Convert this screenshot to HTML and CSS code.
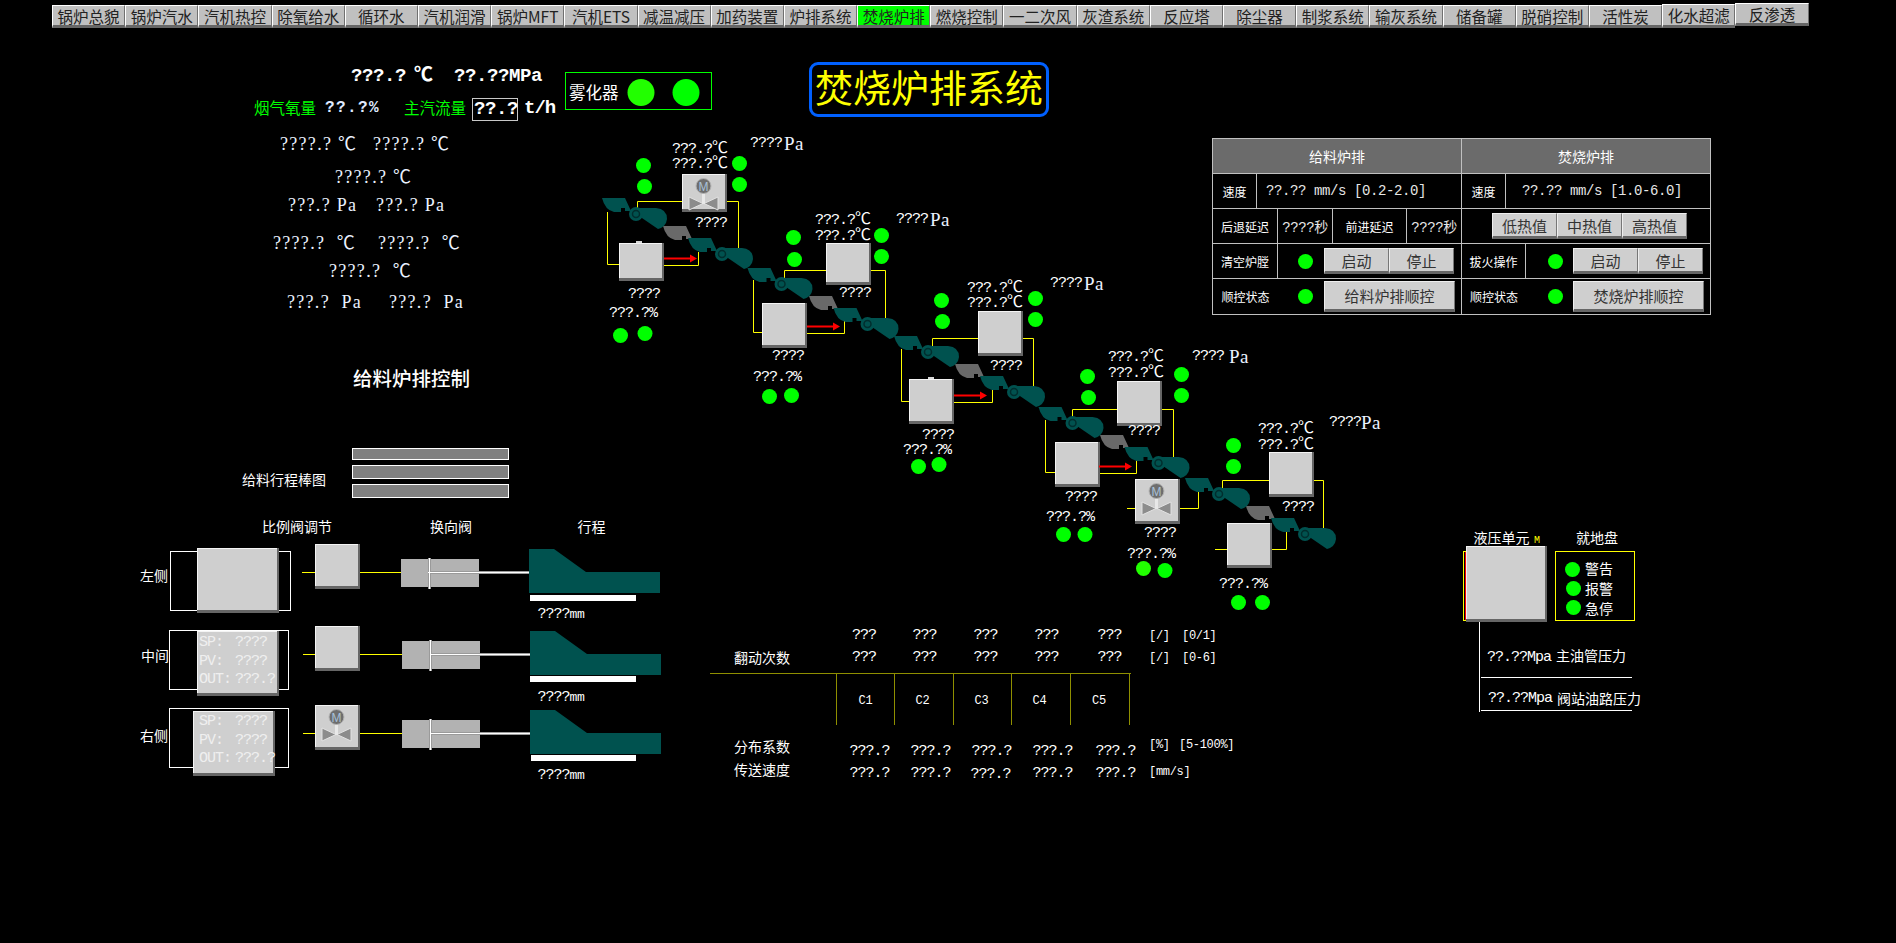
FILE: index.html
```html
<!DOCTYPE html>
<html lang="zh-CN">
<head>
    <meta charset="UTF-8">
    <title>焚烧炉排系统</title>
    <link rel="stylesheet" href="styles.css">
</head>
<body>
    <nav class="nav">
        <a class="nav-btn">锅炉总貌</a><a class="nav-btn">锅炉汽水</a><a class="nav-btn">汽机热控</a><a class="nav-btn">除氧给水</a>
        <a class="nav-btn">循环水</a><a class="nav-btn">汽机润滑</a><a class="nav-btn">锅炉MFT</a><a class="nav-btn">汽机ETS</a>
        <a class="nav-btn">减温减压</a><a class="nav-btn">加药装置</a><a class="nav-btn">炉排系统</a><a class="nav-btn active">焚烧炉排</a>
        <a class="nav-btn">燃烧控制</a><a class="nav-btn">一二次风</a><a class="nav-btn">灰渣系统</a><a class="nav-btn">反应塔</a>
        <a class="nav-btn">除尘器</a><a class="nav-btn">制浆系统</a><a class="nav-btn">输灰系统</a><a class="nav-btn">储备罐</a>
        <a class="nav-btn">脱硝控制</a><a class="nav-btn">活性炭</a><a class="nav-btn up1">化水超滤</a><a class="nav-btn up2">反渗透</a>
    </nav>

    <h1 class="title">焚烧炉排系统</h1>

    <!-- control table, top right -->
    <section class="panel">
        <div class="side">
            <div class="row head">给料炉排</div>
            <div class="row">
                <span class="cell w44">速度</span>
                <span class="cell mono fill">??.?? mm/s [0.2-2.0]</span>
            </div>
            <div class="row">
                <span class="cell w65">后退延迟</span>
                <span class="cell w55 mono">????秒</span>
                <span class="cell w74">前进延迟</span>
                <span class="cell mono fill center">????秒</span>
            </div>
            <div class="row">
                <span class="cell w65">清空炉膛</span>
                <span class="led-slot"><i class="led"></i></span>
                <button class="btn w65b">启动</button><button class="btn w65b">停止</button>
            </div>
            <div class="row last">
                <span class="cell w65 bare">顺控状态</span>
                <span class="led-slot"><i class="led"></i></span>
                <button class="btn wide">给料炉排顺控</button>
            </div>
        </div>
        <div class="side">
            <div class="row head">焚烧炉排</div>
            <div class="row">
                <span class="cell w44">速度</span>
                <span class="cell mono fill pad">??.?? mm/s [1.0-6.0]</span>
            </div>
            <div class="row heat">
                <button class="btn w65b">低热值</button><button class="btn w65b">中热值</button><button class="btn w65b">高热值</button>
            </div>
            <div class="row">
                <span class="cell w64">拔火操作</span>
                <span class="led-slot short"><i class="led"></i></span>
                <button class="btn w65b">启动</button><button class="btn w65b">停止</button>
            </div>
            <div class="row last">
                <span class="cell w64 bare">顺控状态</span>
                <span class="led-slot short"><i class="led"></i></span>
                <button class="btn wide">焚烧炉排顺控</button>
            </div>
        </div>
    </section>

    <!-- process diagram -->
    <svg class="plant" width="1896" height="943" viewBox="0 0 1896 943">
        <defs>
            <g id="b45">
                <rect class="bx-dark" width="45" height="45"/><rect class="bx-hi" width="43" height="42"/><rect class="bx" x="1" y="1" width="42" height="41"/>
            </g>
            <g id="b45m">
                <rect class="bx-dark" width="45" height="42"/><rect class="bx-hi" width="43" height="39"/><rect class="bx" x="1" y="1" width="42" height="38"/>
            </g>
            <g id="b45s">
                <rect class="bx-dark" width="45" height="38"/><rect class="bx-hi" width="43" height="35"/><rect class="bx" x="1" y="1" width="42" height="34"/>
            </g>
            <g id="bwide">
                <rect class="bx-dark" width="82" height="65"/><rect class="bx-hi" width="80" height="62"/><rect class="bx" x="1" y="1" width="79" height="61"/>
            </g>
            <g id="mv">
                <path class="tri" d="M7,23 V36 L21,29.5 Z M36,23 V36 L22,29.5 Z"/>
                <path class="stem" d="M21.5,18 V30"/>
                <circle class="mot" cx="21.5" cy="12" r="7.5"/>
                <text class="mot-t" x="21.5" y="12.5">M</text>
            </g>
            <path id="scoop" d="M-34,-16 H-11 L-5,-3 H-11 V-6 H-15 V-2 H-22 Q-31,-4 -34,-16 Z"/>
            <g id="step">
                <use href="#scoop"/>
                <path d="M3,-6 H20 Q31,-5 31,5 Q30,13 22,15 L3,2 Z"/>
                <circle r="7"/>
                <circle class="ring" r="3.5"/>
            </g>
            <path id="arrow" d="M0,-1 H26 V-4 L33,0 L26,4 V1 H0 Z"/>
        </defs>

        <!-- top readouts -->
        <g class="readout bold">
            <text x="351" y="76">???.?<tspan x="414">℃</tspan></text>
            <text x="454" y="76">??.??MPa</text>
            <text class="green cjk15" x="254" y="107">烟气氧量</text>
            <text class="thin" x="325" y="108">??.?%</text>
            <text class="green cjk15" x="404" y="107">主汽流量</text>
            <rect class="flow-box" x="472.5" y="98.5" width="45" height="22"/>
            <text x="474" y="109">??.?</text>
            <text class="unit" x="524" y="108">t/h</text>
        </g>
        <rect class="green-box" x="565.5" y="72.5" width="146" height="37"/>
        <text class="cjk big16" x="569" y="92">雾化器</text>
        <circle class="ledc alt" cx="641" cy="92.5" r="13.5"/>
        <circle class="ledc" cx="686" cy="92.5" r="13.5"/>

        <!-- left readouts -->
        <g class="serif">
            <text x="280" y="144">????.? ℃</text><text x="373" y="144">????.? ℃</text>
            <text x="335" y="177">????.? ℃</text>
            <text x="288" y="205">???.? Pa</text><text x="376" y="205">???.? Pa</text>
            <text x="273" y="243">????.?  ℃</text><text x="378" y="243">????.?  ℃</text>
            <text x="329" y="271">????.?  ℃</text>
            <text x="287" y="302">???.?  Pa</text><text x="389" y="302">???.?  Pa</text>
        </g>
        <text class="cjk head-t" x="353" y="377">给料炉排控制</text>

        <!-- yellow linkages -->
        <g class="yl">
            <path d="M607.5,212 V264.5 H619"/><path d="M664,265.5 H698.5 V252"/><path d="M637.5,208 V201.5 H682"/><path d="M727,201.5 H738.5 V248"/>
            <path d="M753.5,280 V332.5 H762"/><path d="M807,333.5 H844.5 V319"/><path d="M784.5,278 V270.5 H826"/><path d="M871,270.5 H885.5 V318"/>
            <path d="M901.5,349 V401.5 H909"/><path d="M954,402.5 H992.5 V388"/><path d="M932.5,346 V338.5 H978"/><path d="M1023,338.5 H1033.5 V386"/>
            <path d="M1045.5,420 V472.5 H1055"/><path d="M1100,473.5 H1136.5 V459"/><path d="M1072.5,417 V409.5 H1117"/><path d="M1162,409.5 H1173.5 V457"/>
            <path d="M1127,508.5 H1135"/><path d="M1180,508.5 H1198.5 V491"/><path d="M1222.5,488 V480.5 H1269"/><path d="M1314,480.5 H1323.5 V528"/>
            <path d="M1215,549.5 H1227"/><path d="M1272,549.5 H1286.5 V532"/>
            <path d="M302,572.5 H315"/><path d="M360,572.5 H401"/>
            <path d="M303,654.5 H315"/><path d="M360,654.5 H402"/>
            <path d="M303,733.5 H315"/><path d="M360,733.5 H402"/>
        </g>

        <!-- grate steps -->
        <g class="grate-gray">
            <use href="#scoop" x="697" y="242"/><use href="#scoop" x="843" y="312"/><use href="#scoop" x="989" y="380"/>
            <use href="#scoop" x="1134" y="451"/><use href="#scoop" x="1280" y="522"/>
        </g>
        <g class="grate">
            <use href="#step" x="636" y="214"/><use href="#step" x="722" y="254"/><use href="#step" x="781.5" y="284"/>
            <use href="#step" x="867.5" y="324"/><use href="#step" x="928" y="352"/><use href="#step" x="1014" y="392"/>
            <use href="#step" x="1072.5" y="423"/><use href="#step" x="1158.5" y="463"/><use href="#step" x="1219" y="494"/>
            <use href="#step" x="1305" y="534"/>
        </g>

        <!-- damper boxes -->
        <use href="#b45s" x="682" y="174"/><use href="#mv" x="682" y="174"/>
        <use href="#b45s" x="619" y="243"/><rect class="knob" x="636" y="241" width="6" height="2"/>
        <use href="#b45m" x="826" y="243"/>
        <use href="#b45" x="762" y="303"/>
        <use href="#b45" x="978" y="311"/>
        <use href="#b45" x="909" y="379"/><rect class="knob" x="928" y="377" width="6" height="2"/>
        <use href="#b45" x="1117" y="381"/>
        <use href="#b45" x="1055" y="442"/>
        <use href="#b45" x="1135" y="479"/><use href="#mv" x="1135" y="479"/>
        <use href="#b45" x="1269" y="452"/>
        <use href="#b45" x="1227" y="523"/>

        <g class="red">
            <use href="#arrow" x="664" y="258.5"/><use href="#arrow" x="807" y="326.5"/>
            <use href="#arrow" x="954" y="395.5"/><use href="#arrow" x="1099" y="466.5"/>
        </g>

        <!-- status lamps -->
        <g class="ledc">
            <circle cx="643.5" cy="165.5" r="7.5"/><circle cx="644.5" cy="186.5" r="7.5"/><circle cx="739.5" cy="163.5" r="7.5"/><circle cx="739.5" cy="184.5" r="7.5"/>
            <circle cx="620.5" cy="335.5" r="7.5"/><circle cx="645" cy="333.5" r="7.5"/><circle cx="793.5" cy="237.5" r="7.5"/><circle cx="794.5" cy="259.5" r="7.5"/>
            <circle cx="881.5" cy="235.5" r="7.5"/><circle cx="881.5" cy="256.5" r="7.5"/><circle cx="769.5" cy="396.5" r="7.5"/><circle cx="791.5" cy="395.5" r="7.5"/>
            <circle cx="941.5" cy="300.5" r="7.5"/><circle cx="942.5" cy="321.5" r="7.5"/><circle cx="1035.5" cy="298.5" r="7.5"/><circle cx="1035.5" cy="319.5" r="7.5"/>
            <circle cx="918.5" cy="466.5" r="7.5"/><circle cx="939" cy="464.5" r="7.5"/><circle cx="1087.5" cy="376.5" r="7.5"/><circle cx="1088.5" cy="397.5" r="7.5"/>
            <circle cx="1181.5" cy="374.5" r="7.5"/><circle cx="1181.5" cy="395.5" r="7.5"/><circle cx="1063.5" cy="534.5" r="7.5"/><circle cx="1085" cy="534.5" r="7.5"/>
            <circle cx="1233.5" cy="445.5" r="7.5"/><circle cx="1233.5" cy="466.5" r="7.5"/><circle class="alt" cx="1143.5" cy="568.5" r="7.5"/><circle cx="1165" cy="570.5" r="7.5"/>
            <circle cx="1238.5" cy="602.5" r="7.5"/><circle cx="1262.5" cy="602.5" r="7.5"/>
        </g>

        <!-- diagram values -->
        <g class="num">
            <text x="672" y="149">???.?<tspan class="deg">℃</tspan></text><text x="672" y="164">???.?<tspan class="deg">℃</tspan></text>
            <text x="750" y="143">????<tspan class="pa" dx="2">Pa</tspan></text>
            <text x="695" y="223">????</text><text x="628" y="294">????</text><text x="609" y="313">???.?%</text>

            <text x="815" y="220">???.?<tspan class="deg">℃</tspan></text><text x="815" y="236">???.?<tspan class="deg">℃</tspan></text>
            <text x="896" y="219">????<tspan class="pa" dx="2">Pa</tspan></text>
            <text x="839" y="293">????</text><text x="772" y="356">????</text><text x="753" y="377">???.?%</text>

            <text x="967" y="288">???.?<tspan class="deg">℃</tspan></text><text x="967" y="303">???.?<tspan class="deg">℃</tspan></text>
            <text x="1050" y="283">????<tspan class="pa" dx="2">Pa</tspan></text>
            <text x="990" y="366">????</text><text x="922" y="435">????</text><text x="903" y="450">???.?%</text>

            <text x="1108" y="357">???.?<tspan class="deg">℃</tspan></text><text x="1108" y="373">???.?<tspan class="deg">℃</tspan></text>
            <text x="1192" y="356">????<tspan class="pa" dx="5">Pa</tspan></text>
            <text x="1128" y="431">????</text><text x="1065" y="497">????</text><text x="1046" y="517">???.?%</text>

            <text x="1258" y="429">???.?<tspan class="deg">℃</tspan></text><text x="1258" y="445">???.?<tspan class="deg">℃</tspan></text>
            <text x="1329" y="422">????<tspan class="pa">Pa</tspan></text>
            <text x="1282" y="507">????</text><text x="1144" y="533">????</text><text x="1127" y="554">???.?%</text><text x="1219" y="584">???.?%</text>
        </g>

        <!-- feeder travel bars -->
        <g class="bar">
            <rect x="352.5" y="448.5" width="156" height="11"/><rect x="352.5" y="465.5" width="156" height="13"/><rect x="352.5" y="484.5" width="156" height="13"/>
        </g>
        <g class="cjk">
            <text x="242" y="479">给料行程棒图</text>
            <text x="262" y="525.5">比例阀调节</text><text x="430" y="525.5">换向阀</text><text x="577.5" y="525.5">行程</text>
            <text x="140" y="575">左侧</text><text x="141" y="655">中间</text><text x="140" y="735">右侧</text>
        </g>

        <!-- feeder rows -->
        <g class="wl">
            <rect x="170.5" y="551.5" width="120" height="59"/><rect x="169.5" y="630.5" width="119" height="59"/><rect x="169.5" y="708.5" width="119" height="59"/>
        </g>
        <use href="#bwide" x="197" y="548"/><use href="#bwide" x="197" y="631"/><use href="#bwide" x="193" y="711"/>
        <g class="pid">
            <text x="199" y="642">SP:<tspan x="235">????</tspan></text><text x="199" y="661">PV:<tspan x="235">????</tspan></text><text x="199" y="679">OUT:<tspan x="235">???.?</tspan></text>
            <text x="199" y="721">SP:<tspan x="235">????</tspan></text><text x="199" y="740">PV:<tspan x="235">????</tspan></text><text x="199" y="758">OUT:<tspan x="235">???.?</tspan></text>
        </g>
        <use href="#b45" x="315" y="544"/><use href="#b45" x="315" y="626"/><use href="#b45" x="315" y="705"/><use href="#mv" x="315" y="705"/>

        <g class="valve">
            <rect x="401" y="559" width="78" height="28"/><rect x="402" y="641" width="78" height="28"/><rect x="402" y="720" width="78" height="28"/>
        </g>
        <g class="rod-base">
            <path d="M428,572.5 H529 M429.5,558 V589"/><path d="M430,654.5 H531 M430.5,640 V671"/><path d="M430,733.5 H531 M430.5,719 V750"/>
        </g>
        <g class="rod">
            <path d="M428,572.5 H529 M429.5,558 V589"/><path d="M430,654.5 H531 M430.5,640 V671"/><path d="M430,733.5 H531 M430.5,719 V750"/>
        </g>
        <g class="grate">
            <path d="M529,549 H554 L586,572 H660 V593 H529 Z"/><path d="M530,631 H555 L587,654 H661 V675 H530 Z"/><path d="M530,710 H555 L587,733 H661 V754 H530 Z"/>
        </g>
        <g class="white-fill">
            <rect x="530" y="595" width="106" height="6"/><rect x="530" y="676" width="106" height="6"/><rect x="531" y="755" width="105" height="6"/>
        </g>
        <g class="num">
            <text x="537.5" y="614">????<tspan class="mm">mm</tspan></text><text x="537.5" y="697">????<tspan class="mm">mm</tspan></text><text x="537.5" y="775">????<tspan class="mm">mm</tspan></text>
        </g>

        <!-- C1..C5 table -->
        <g class="ol">
            <path d="M710,673.5 H1131"/>
            <path d="M836.5,673 V725 M894.5,673 V725 M953.5,673 V725 M1011.5,673 V725 M1070.5,673 V725 M1129.5,673 V725"/>
        </g>
        <g class="cjk">
            <text x="734" y="657">翻动次数</text><text x="734" y="745.5">分布系数</text><text x="734" y="768.5">传送速度</text>
        </g>
        <g class="num">
            <text x="852" y="635">???</text><text x="912.5" y="635">???</text><text x="973.5" y="635">???</text><text x="1034.5" y="635">???</text><text x="1097.5" y="635">???</text>
            <text x="852" y="657">???</text><text x="912.5" y="657">???</text><text x="973.5" y="657">???</text><text x="1034.5" y="657">???</text><text x="1097.5" y="657">???</text>
            <text x="849.5" y="751">???.?</text><text x="910.5" y="751">???.?</text><text x="971.5" y="751">???.?</text><text x="1032.5" y="751">???.?</text><text x="1095.5" y="751">???.?</text>
            <text x="849.5" y="773">???.?</text><text x="910.5" y="773">???.?</text><text x="970.5" y="774">???.?</text><text x="1032.5" y="773">???.?</text><text x="1095.5" y="773">???.?</text>
        </g>
        <g class="small">
            <text x="858.5" y="701">C1</text><text x="915.5" y="701">C2</text><text x="974.5" y="701">C3</text><text x="1032.5" y="701">C4</text><text x="1092" y="701">C5</text>
            <text x="1149" y="636">[/]</text><text x="1182" y="636">[0/1]</text>
            <text x="1149" y="658">[/]</text><text x="1182" y="658">[0-6]</text>
            <text x="1149" y="745">[%]</text><text x="1179" y="745">[5-100%]</text>
            <text x="1149" y="772">[mm/s]</text>
        </g>

        <!-- hydraulic unit -->
        <text class="cjk" x="1473.5" y="537">液压单元</text>
        <text class="tiny-m" x="1534" y="540.5">M</text>
        <text class="cjk" x="1576" y="537">就地盘</text>
        <rect class="yl" x="1463.5" y="551.5" width="10" height="69"/>
        <path class="redline" d="M1465.5,552 V620"/>
        <rect class="bx-dark" x="1466" y="546" width="81" height="76"/>
        <rect class="bx-hi" x="1466" y="546" width="79" height="73"/>
        <rect class="bx" x="1467" y="547" width="78" height="72"/>
        <rect class="yl" x="1555.5" y="551.5" width="79" height="69"/>
        <g class="ledc">
            <circle cx="1572.5" cy="569.5" r="7.5"/><circle cx="1573.5" cy="588.5" r="7.5"/><circle cx="1573.5" cy="607.5" r="7.5"/>
        </g>
        <g class="cjk">
            <text x="1585" y="568">警告</text><text x="1585" y="588">报警</text><text x="1585" y="607.5">急停</text>
        </g>
        <path class="wl" d="M1479.5,622 V712 M1481,677.5 H1632 M1481,710.5 H1632"/>
        <g class="num">
            <text x="1487" y="657">??.??Mpa</text><text x="1488" y="698">??.??Mpa</text>
        </g>
        <g class="cjk">
            <text x="1556" y="655">主油管压力</text><text x="1557" y="698">阀站油路压力</text>
        </g>
    </svg>
</body>
</html>
```

FILE: styles.css
```css
* {
    margin: 0;
    padding: 0;
    box-sizing: border-box;
}

html, body {
    width: 1896px;
    height: 943px;
    overflow: hidden;
    background: #000;
}

body {
    position: relative;
    font-family: "Noto Sans CJK SC", sans-serif;
    color: #fff;
}

/* top menu */
.nav {
    display: flex;
    align-items: flex-start;
    padding: 3px 0 0 52px;
    position: relative;
    z-index: 2;
}

.nav-btn {
    display: flex;
    align-items: center;
    justify-content: center;
    width: 73.2px;
    height: 23px;
    margin-top: 2px;
    background: #c0c0c0;
    border-top: 1px solid #fff;
    border-left: 1px solid #fff;
    border-right: 1px solid #707070;
    border-bottom: 3px solid #666;
    color: #222;
    font-size: 15.5px;
    white-space: nowrap;
}

.nav-btn.active {
    background: #00ff00;
}

.nav-btn.up1 {
    margin-top: 1px;
    height: 24px;
}

.nav-btn.up2 {
    margin-top: 0;
}

.title {
    position: absolute;
    left: 809px;
    top: 62px;
    width: 240px;
    height: 55px;
    border: 3px solid #0060ff;
    border-radius: 9px;
    color: #ffff00;
    font-size: 38px;
    font-weight: 400;
    line-height: 42px;
    text-align: center;
    white-space: nowrap;
}

/* control panel */
.panel {
    position: absolute;
    left: 1212px;
    top: 138px;
    width: 499px;
    height: 177px;
    display: flex;
    border: 1px solid #c0c0c0;
    z-index: 2;
}

.side {
    width: 248px;
    display: flex;
    flex-direction: column;
}

.side + .side {
    width: 249px;
    border-left: 1px solid #c0c0c0;
}

.row {
    height: 35px;
    display: flex;
    align-items: stretch;
    border-bottom: 1px solid #c0c0c0;
    font-size: 12px;
}

.row.last {
    border-bottom: 0;
}

.row.head {
    background: #6b6b6b;
    justify-content: center;
    align-items: center;
    font-size: 14px;
}

.row.heat {
    padding: 4px 0 0 30px;
    align-items: flex-start;
}

.cell {
    display: flex;
    align-items: center;
    justify-content: center;
    border-right: 1px solid #c0c0c0;
    white-space: nowrap;
}

.cell.bare {
    border-right: 0;
}

.cell.fill {
    flex: 1;
    border-right: 0;
    justify-content: flex-start;
    padding-left: 9px;
}

.cell.center {
    justify-content: center;
    padding-left: 0;
}

.cell.pad {
    padding-left: 16px;
}

.mono {
    font-family: "Liberation Mono", "Noto Sans CJK SC", monospace;
    font-size: 14px;
    letter-spacing: -.4px;
    color: #e6e6e6;
}

.w44 { width: 44px; }
.w55 { width: 55px; }
.w64 { width: 64px; }
.w65 { width: 65px; }
.w74 { width: 74px; }

.led-slot {
    width: 46px;
    display: flex;
    align-items: center;
    justify-content: center;
    padding-left: 9px;
}

.led-slot.short {
    width: 47px;
    padding-left: 11px;
}

.led {
    width: 15px;
    height: 15px;
    border-radius: 50%;
    background: #00ff00;
}

.btn {
    align-self: center;
    height: 26px;
    background: #cfcfcf;
    border: 0;
    border-top: 1px solid #eee;
    border-left: 1px solid #eee;
    border-right: 1px solid #777;
    border-bottom: 3px solid #666;
    color: #333;
    font-family: inherit;
    font-size: 15px;
}

.w65b { width: 65px; }

.row.heat .btn {
    align-self: flex-start;
}

.btn.wide {
    width: 131px;
    height: 31px;
}

/* diagram */
.plant {
    position: absolute;
    left: 0;
    top: 0;
    display: block;
}

.plant text {
    dominant-baseline: central;
    white-space: pre;
    fill: #fff;
}

.bx { fill: #cfcfcf; }
.bx-hi { fill: #f4f4f4; }
.bx-dark { fill: #666; }

.knob { fill: #d8d8d8; }

.tri {
    fill: #8c8c8c;
    stroke: #e2e2e2;
    stroke-width: 1;
}

.stem {
    stroke: #e8e8e8;
    stroke-width: 3;
    fill: none;
}

.mot {
    fill: #6e6e6e;
    stroke: #b4b4b4;
    stroke-width: 1;
}

.plant .mot-t {
    font-family: "Liberation Sans", sans-serif;
    font-size: 12px;
    fill: #a8c0d8;
    text-anchor: middle;
}

.readout text {
    font-family: "Liberation Mono", "Noto Sans CJK SC", monospace;
    font-size: 19px;
    letter-spacing: -.4px;
}

.readout.bold text {
    font-weight: 700;
}

.readout.bold .unit {
    letter-spacing: -1px;
}

.readout .thin {
    font-weight: 400;
    font-size: 16px;
    letter-spacing: 1.4px;
    fill: #dfe9ff;
}

.plant .readout .green {
    fill: #00ff00;
}

.plant .readout .cjk15 {
    font-family: "Noto Sans CJK SC", sans-serif;
    font-size: 15.5px;
    font-weight: 400;
    letter-spacing: 0;
}

.flow-box {
    fill: none;
    stroke: #c8c8c8;
    stroke-width: 1;
}

.green-box {
    fill: none;
    stroke: #00ff00;
    stroke-width: 1;
}

.ledc { fill: #00ff00; }
.alt { fill: #22ff00; }

.cjk text, text.cjk {
    font-family: "Noto Sans CJK SC", sans-serif;
    font-size: 14px;
}

text.cjk.big16 {
    font-size: 16.5px;
}

text.cjk.head-t {
    font-size: 19.5px;
    font-weight: 500;
}

.serif text {
    font-family: "Liberation Serif", "Noto Sans CJK SC", serif;
    font-size: 18px;
    letter-spacing: 1.3px;
}

.plant .serif text {
    fill: #eaf2ff;
}

.num text {
    font-family: "Liberation Mono", "Noto Sans CJK SC", monospace;
    font-size: 15px;
    letter-spacing: -1px;
}

.num .deg {
    font-size: 16px;
}

.num .pa {
    font-family: "Liberation Serif", serif;
    font-size: 19px;
    letter-spacing: .5px;
    fill: #eaf2ff;
}

.num .mm {
    font-size: 13px;
    letter-spacing: -.4px;
}

.pid text {
    font-family: "Liberation Mono", monospace;
    font-size: 15px;
    letter-spacing: -1px;
}

.plant .pid text {
    fill: #efefef;
}

.small text {
    font-family: "Liberation Mono", monospace;
    font-size: 12px;
    letter-spacing: -.3px;
}

.plant .tiny-m {
    font-family: "Liberation Mono", monospace;
    font-size: 10px;
    fill: #ffff00;
}

.yl, .yl path {
    fill: none;
    stroke: #ffff00;
    stroke-width: 1;
}

.wl, .wl rect {
    fill: none;
    stroke: #fff;
    stroke-width: 1;
}

.ol path {
    fill: none;
    stroke: #8f8f00;
    stroke-width: 1;
}

.redline {
    fill: none;
    stroke: #ff0000;
    stroke-width: 1;
}

.red { fill: #ff0000; }

.grate { fill: #00524f; }
.grate-gray { fill: #696969; }

.ring {
    fill: #00524f;
    stroke: #002e2e;
    stroke-width: 1.5;
}

.bar rect {
    fill: #808080;
    stroke: #fff;
    stroke-width: 1;
}

.valve { fill: #b2b2b2; }

.rod-base path {
    fill: none;
    stroke: #9a9a9a;
    stroke-width: 3;
}

.rod path {
    fill: none;
    stroke: #fff;
    stroke-width: 1;
}

.white-fill { fill: #fff; }
```
